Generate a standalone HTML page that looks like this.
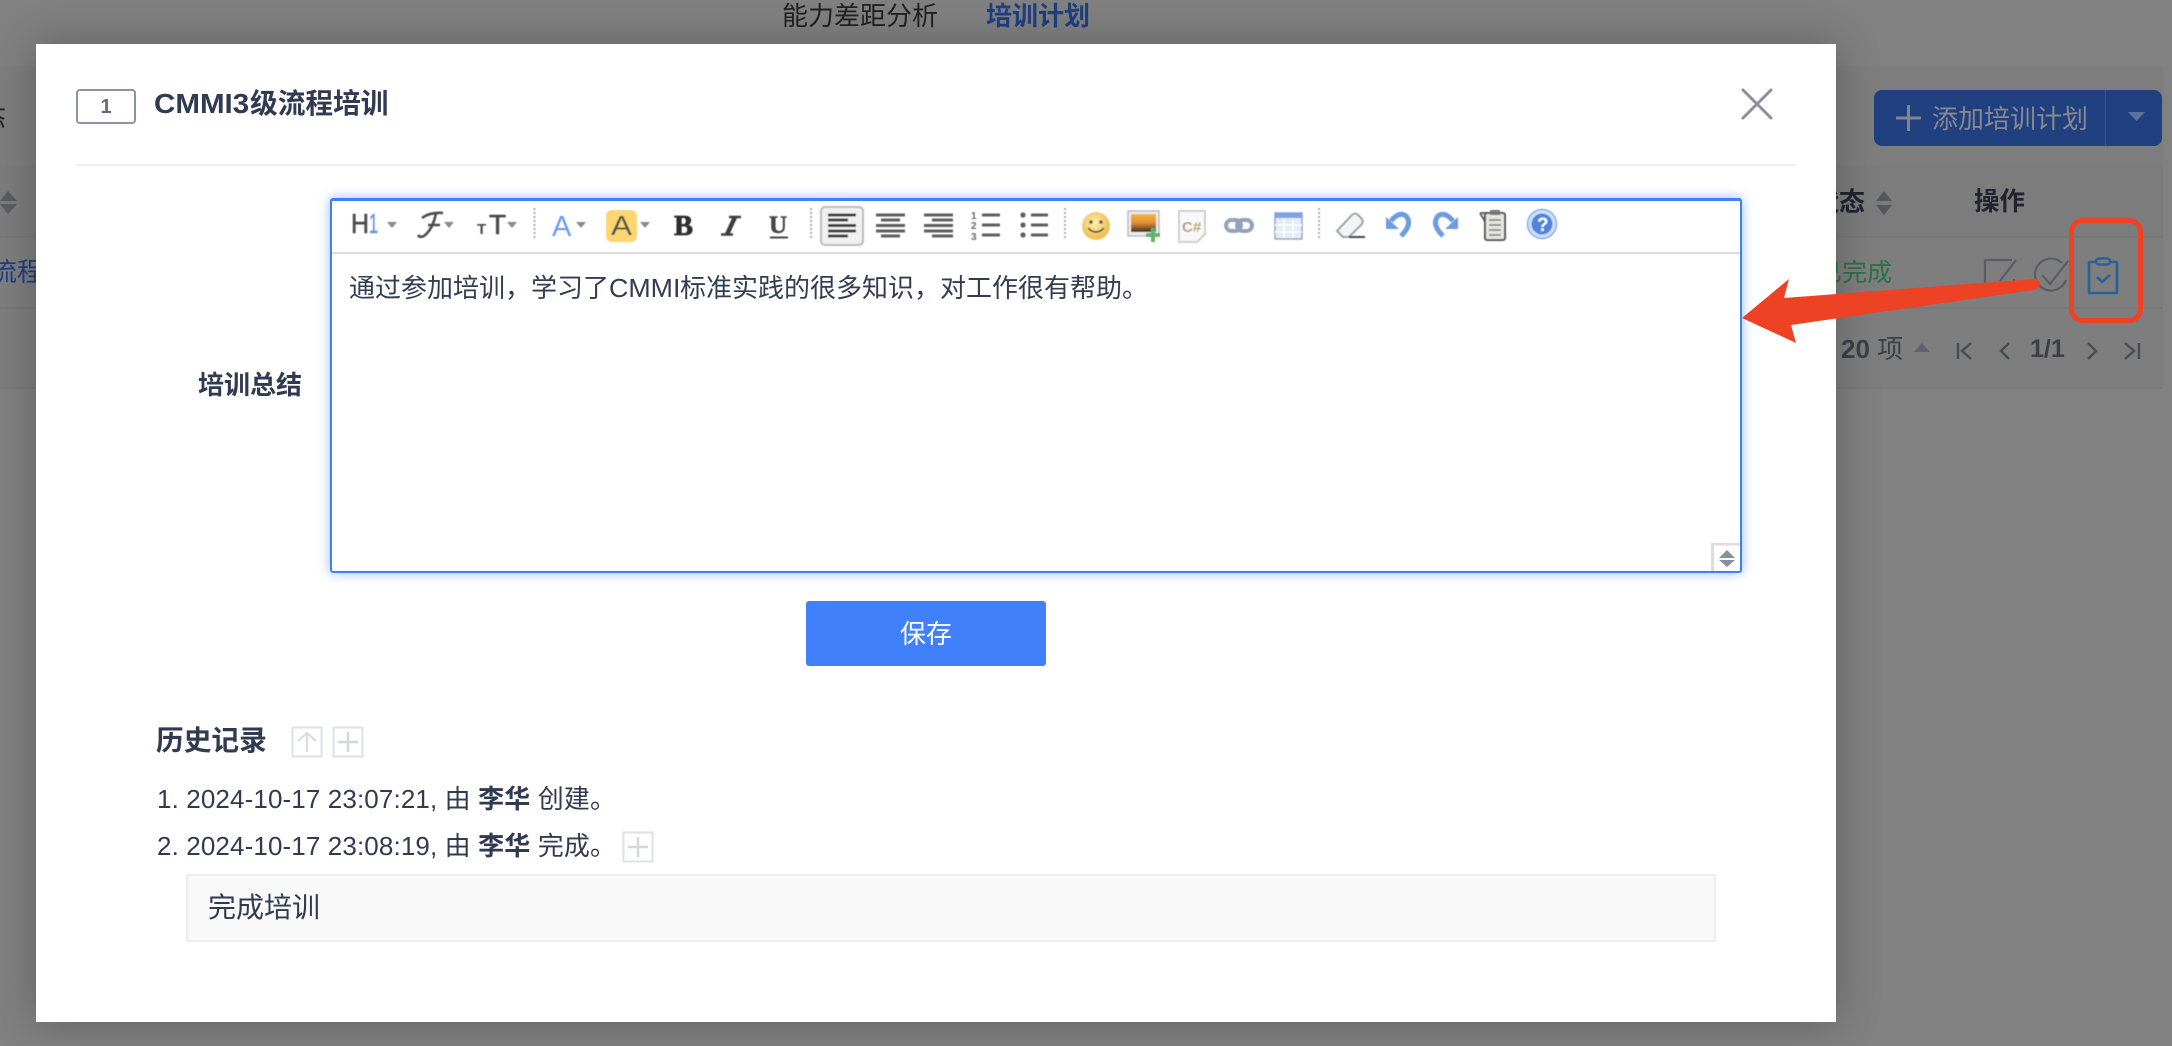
<!DOCTYPE html>
<html><head><meta charset="utf-8">
<style>
html,body{margin:0;padding:0;width:2172px;height:1046px;overflow:hidden;background:#818181}
*{box-sizing:border-box}
body{font-family:"Liberation Sans","Noto Sans CJK SC",sans-serif;color:#2f3a50;position:relative}
.a{position:absolute;white-space:nowrap;line-height:1}
.sx{display:inline-block;transform-origin:0 50%}
</style></head><body>
<!-- background -->
<div class="a" style="left:782px;top:3px;font-size:26px;color:#222">能力差距分析</div>
<div class="a" style="left:986px;top:3px;font-size:26px;font-weight:700;color:#1f3f7f">培训计划</div>
<div class="a" style="left:0;top:66px;width:2163px;height:323px;background:#7e7e7e;border-bottom:2px solid #797979"></div>
<div class="a" style="left:0;top:166px;width:2163px;height:71px;background:#7c7c7c"></div>
<div class="a" style="left:0;top:236px;width:2163px;height:2px;background:#787878"></div>
<div class="a" style="left:0;top:307px;width:2163px;height:2px;background:#787878"></div>
<div class="a" style="left:-20px;top:105px;font-size:26px;color:#222">态</div>
<div class="a" style="left:-9px;top:259px;font-size:26px;color:#1f3f7f">流程</div>
<svg class="a" style="left:0;top:186px" width="20" height="32"><path d="M0 15 8 5 17 15zM0 18 8 28 17 18z" fill="#5a5c64"/></svg>
<!-- right bg -->
<div class="a" style="left:1874px;top:90px;width:288px;height:56px;background:#204080;border-radius:8px"></div>
<div class="a" style="left:2105px;top:90px;width:1px;height:56px;background:#3a5488"></div>
<svg class="a" style="left:1894px;top:103px" width="30" height="30"><path d="M14.500 2V28M2 15H27" stroke="#7f8590" stroke-width="3" fill="none"/></svg>
<div class="a" style="left:1932px;top:106px;font-size:26px;color:#858a92">添加培训计划</div>
<svg class="a" style="left:2126px;top:110px" width="20" height="14"><path d="M2 2H19L10.500 11z" fill="#5d7299"/></svg>
<div class="a" style="left:1813px;top:189px;font-size:26px;font-weight:700;color:#1f2430">状态</div>
<svg class="a" style="left:1874px;top:188px" width="20" height="30"><path d="M2 13 10 3 18 13zM2 17 10 27 18 17z" fill="#55575f"/></svg>
<div class="a" style="left:1974px;top:190px;font-size:25.500px;font-weight:700;color:#1f2430">操作</div>
<div class="a" style="left:1817px;top:261px;font-size:25px;color:#2a7248">已完成</div>
<svg class="a" style="left:1980px;top:255px" width="42" height="42" fill="none" stroke="#5b5d62" stroke-width="2.200"><path d="M32 5H5V37H34V24M36 5 20 26"/></svg>
<svg class="a" style="left:2032px;top:256px" width="40" height="40" fill="none" stroke="#5b5d62" stroke-width="2.200"><path d="M30 7A16 16 0 1 0 34 24"/><path d="M10 19 18 28 36 5"/></svg>
<svg class="a" style="left:2084px;top:254px" width="38" height="44" fill="none" stroke="#2a5f9b" stroke-width="2.600" stroke-linejoin="round"><path d="M12 8H6Q5 8 5 9V38Q5 39 6 39H32Q33 39 33 38V9Q33 8 32 8H26"/><rect x="12" y="4.500" width="14" height="6" rx="3"/><path d="M13 23 18 28 26 21"/></svg>
<div class="a" style="left:1841px;top:336px;font-size:26px;color:#3d3f47"><b>20</b> 项</div>
<svg class="a" style="left:1910px;top:340px" width="24" height="14"><path d="M4 12 12 3 20 12z" fill="#60626a"/></svg>
<svg class="a" style="left:1952px;top:338px" width="190" height="26" fill="none" stroke="#4a4c54" stroke-width="2.400"><path d="M6 5V21M19 5 10 13 19 21M57 5 49 13 57 21M136 5 144 13 136 21M173 5 182 13 173 21M187 5V21"/></svg>
<div class="a" style="left:2030px;top:337px;font-size:25px;font-weight:700;color:#3d3f47">1/1</div>

<!-- modal -->
<div class="a" style="left:36px;top:44px;width:1800px;height:978px;background:#fff;box-shadow:0 0 40px rgba(0,0,0,.26)"></div>
<div class="a" style="left:76px;top:89px;width:60px;height:35px;border:2px solid #8e92a6;border-radius:4px;text-align:center;font-size:20px;line-height:32px;color:#666b7c;font-weight:700">1</div>
<div class="a" style="left:154px;top:90px;font-size:27.700px;font-weight:700;color:#303b51"><span class="sx" style="width:96px;transform:scaleX(1.067)">CMMI3</span>级流程培训</div>
<div class="a" style="left:76px;top:164px;width:1720px;height:2px;background:#eee"></div>
<svg class="a" style="left:1738px;top:85px" width="38" height="38"><path d="M5 5 33 33M33 5 5 33" stroke="#8a8ea2" stroke-width="3" stroke-linecap="round"/></svg>
<div class="a" style="left:198px;top:372px;font-size:26px;font-weight:700;color:#303b51">培训总结</div>

<!-- editor -->
<div class="a" style="left:330px;top:198px;width:1412px;height:375px;border:2px solid #4080f5;border-top-width:3px;border-radius:3px;background:#fff;box-shadow:0 0 11px rgba(64,128,255,.55)"></div>
<div class="a" style="left:332px;top:252px;width:1408px;height:2px;background:#dcdcdc"></div>
<div class="a" style="left:349px;top:275px;font-size:26px;color:#333d52">通过参加培训，学习了<span class="sx" style="width:71px;transform:scaleX(1.03)">CMMI</span>标准实践的很多知识，对工作很有帮助。</div>
<svg class="a" style="left:1711px;top:543px" width="29" height="28"><path d="M1.500 28V1H29" fill="none" stroke="#ddd" stroke-width="3"/><path d="M8 15 16 7 24 15zM8 17 16 24 24 17z" fill="#8a8ea2"/></svg>

<!-- toolbar -->
<svg class="a" style="left:0;top:0" width="2172" height="300">
<defs><filter id="b"><feGaussianBlur stdDeviation=".5"/></filter>
<radialGradient id="sm" cx=".45" cy=".4"><stop offset="0" stop-color="#fdf0b0"/><stop offset="1" stop-color="#eec25e"/></radialGradient>
<linearGradient id="ig" x1="0" y1="0" x2="0" y2="1"><stop offset="0" stop-color="#f4b64a"/><stop offset=".5" stop-color="#e48a30"/><stop offset="1" stop-color="#3c3226"/></linearGradient></defs>
<g filter="url(#b)">
<text x="351" y="233" font-size="28" textLength="18" lengthAdjust="spacingAndGlyphs" fill="#4a4a4a" stroke="#4a4a4a" stroke-width=".6">H</text>
<text x="369" y="233" font-size="28" textLength="9" lengthAdjust="spacingAndGlyphs" fill="#6c96e6" stroke="#6c96e6" stroke-width=".6">1</text>
<path d="M422 218Q430 212 443 213M436 213Q433 229 424 236Q420 238 418 235M428 225H440" stroke="#4c4c4c" stroke-width="2.600" fill="none"/>
<text x="477" y="234" font-size="15" font-weight="700" fill="#4a4a4a">T</text>
<text x="489" y="234" font-size="28" fill="#4a4a4a" stroke="#4a4a4a" stroke-width=".6">T</text>
<text x="552" y="236" font-size="29" fill="#6c9bf0">A</text>
<rect x="606" y="210" width="31" height="32" rx="6" fill="#fbd671"/>
<text x="611" y="235" font-size="28" textLength="21" lengthAdjust="spacingAndGlyphs" fill="#575248">A</text>
<text x="674" y="235" font-family="Liberation Serif" font-weight="700" font-size="28" textLength="19" lengthAdjust="spacingAndGlyphs" fill="#2e2e2e" stroke="#2e2e2e" stroke-width=".8">B</text>
<path d="M729 217H741M721 234.500H733M735 217 727 234.500" stroke="#3c3c3c" stroke-width="2.400" fill="none"/>
<path d="M735 217 727 234.500" stroke="#3c3c3c" stroke-width="4.500" fill="none"/>
<text x="769" y="233" font-family="Liberation Serif" font-weight="700" font-size="25" fill="#444" stroke="#444" stroke-width=".5">U</text>
<path d="M770 237.500H788" stroke="#444" stroke-width="2"/>
<g fill="#888"><path d="M387 222H397L392 228zM444 222H454L449 228zM507 222H517L512 228zM576 222H586L581 228zM640 222H650L645 228z"/></g>
<g stroke="#aaa" stroke-width="2" stroke-dasharray="2 2"><path d="M534.500 208V240M811 208V240M1065 208V240M1319 208V240"/></g>
<rect x="821" y="207" width="42" height="38" rx="4" fill="#f0f0f0" stroke="#bbb" stroke-width="2"/>
<g stroke-width="3">
<path d="M828 215H856M828 220H848M828 225.500H856M828 231H856M828 236H848" stroke="#3a3a3a"/>
<path d="M876 215H905M881 220H900M876 225.500H905M876 231H905M881 236H900M924 215H953M932 220H953M924 225.500H953M924 231H953M932 236H953" stroke="#5e5e5e"/>
<path d="M982 215H1000M982 225H1000M982 235H1000M1031 215H1048M1031 225H1048M1031 235H1048" stroke="#5e5e5e"/>
<circle cx="1023" cy="215" r="2.600" fill="#5e5e5e" stroke="none"/><circle cx="1023" cy="225" r="2.600" fill="#5e5e5e" stroke="none"/><circle cx="1023" cy="235" r="2.600" fill="#5e5e5e" stroke="none"/>
</g>
<text x="971" y="219" font-size="10" font-weight="700" fill="#666">1</text><text x="971" y="229" font-size="10" font-weight="700" fill="#666">2</text><text x="971" y="240" font-size="10" font-weight="700" fill="#666">3</text>
<circle cx="1096" cy="226" r="14" fill="url(#sm)"/>
<circle cx="1091" cy="222" r="1.800" fill="#6a5630"/><circle cx="1101" cy="222" r="1.800" fill="#6a5630"/>
<path d="M1088 228Q1096 236 1104 228" stroke="#6a5630" stroke-width="1.800" fill="none"/>
<rect x="1128" y="211" width="31" height="25" fill="#eee" stroke="#bbb" stroke-width="1.500"/>
<rect x="1131" y="214" width="25" height="18" fill="url(#ig)"/>
<path d="M1153 228V242M1146 235H1160" stroke="#5fb36b" stroke-width="4"/>
<path d="M1179 211H1205V234L1197 242H1179z" fill="#f8f8f8" stroke="#cfcfcf" stroke-width="2"/>
<text x="1182" y="232" font-size="15" font-weight="700" fill="#b8a07a">C#</text>
<g fill="none" stroke="#94a2b8" stroke-width="4"><rect x="1226" y="220" width="15" height="11" rx="5.500"/><rect x="1237" y="220" width="15" height="11" rx="5.500"/></g>
<rect x="1275" y="213" width="27" height="26" fill="#e4ecf6" stroke="#94a6c0" stroke-width="1.500"/>
<rect x="1275" y="213" width="27" height="5" fill="#7ea2ea"/>
<path d="M1284 218V238M1293 218V238M1275 225H1302M1275 232H1302" stroke="#fff" stroke-width="1.500"/>
<path d="M1337 231 1352 215Q1355 212 1358 215L1362 219Q1364 222 1361 225L1349 237H1343Z" fill="#f4f4f4" stroke="#9aa0a8" stroke-width="2"/>
<path d="M1349 237H1365" stroke="#444" stroke-width="2"/>
<path d="M1391 221Q1399 211 1406 216Q1413 224 1401 236" fill="none" stroke="#6d9bdf" stroke-width="5"/>
<path d="M1386 217V229H1399Z" fill="#6d9bdf"/>
<path d="M1453 221Q1445 211 1438 216Q1431 224 1443 236" fill="none" stroke="#6d9bdf" stroke-width="5"/>
<path d="M1458 217V229H1445Z" fill="#6d9bdf"/>
<path d="M1480 213H1488M1480 213 1490 230" stroke="#666" stroke-width="2" fill="none"/>
<rect x="1485" y="213" width="20" height="27" rx="2" fill="#e6e6e0" stroke="#555" stroke-width="2"/>
<rect x="1490" y="210" width="10" height="5" fill="#777"/>
<path d="M1489 220H1501M1489 225H1501M1489 230H1501M1489 235H1501" stroke="#777" stroke-width="1.500"/>
<circle cx="1542" cy="224" r="14.500" fill="#cfe0f8" stroke="#86aee6" stroke-width="1.500"/>
<circle cx="1542" cy="224" r="10.500" fill="#4f84dc"/>
<text x="1537" y="231" font-size="19" font-weight="700" fill="#fff">?</text>
</g>
</svg>

<!-- save -->
<div class="a" style="left:806px;top:601px;width:240px;height:65px;background:#4080fa;border-radius:3px;color:#fff;font-size:26px;line-height:67px;text-align:center">保存</div>

<!-- history -->
<div class="a" style="left:156px;top:727px;font-size:27.700px;font-weight:700;color:#303b51">历史记录</div>
<svg class="a" style="left:291px;top:726px" width="74" height="32" fill="none"><rect x="1.500" y="1.500" width="29" height="29" fill="#fff" stroke="#dfe1e7" stroke-width="2"/><rect x="42.500" y="1.500" width="29" height="29" fill="#fff" stroke="#dfe1e7" stroke-width="2"/><path d="M16 26V7M7 15 16 7 25 15" stroke="#d8dbe4" stroke-width="2"/><path d="M57 6V26M47 16H67" stroke="#d4d7e1" stroke-width="2.500"/></svg>
<div class="a" style="left:157px;top:786px;font-size:26px;letter-spacing:.12px;color:#303b51">1. 2024-10-17 23:07:21, 由 <b>李华</b> 创建。</div>
<div class="a" style="left:157px;top:833px;font-size:26px;letter-spacing:.12px;color:#303b51">2. 2024-10-17 23:08:19, 由 <b>李华</b> 完成。</div>
<svg class="a" style="left:622px;top:831px" width="32" height="32" fill="none"><rect x="1.500" y="1.500" width="29" height="29" fill="#fff" stroke="#dfe1e7" stroke-width="2"/><path d="M16 6V26M6 16H26" stroke="#d4d7e1" stroke-width="2.500"/></svg>
<div class="a" style="left:186px;top:874px;width:1530px;height:68px;background:#f9f9f9;border:2px solid #eee;font-size:28px;line-height:64px;padding-left:20px;color:#303b51">完成培训</div>

<!-- annotations -->
<div class="a" style="left:2069px;top:218px;width:74px;height:105px;border:5.500px solid #ee4224;border-radius:14px"></div>
<svg class="a" style="left:0;top:0" width="2172" height="1046"><path d="M1742 318 1789 279 1784 298 2034 279Q2040 279 2040 284Q2040 288 2034 290L1791 325 1796 343Z" fill="#ee4224"/></svg>
</body></html>
